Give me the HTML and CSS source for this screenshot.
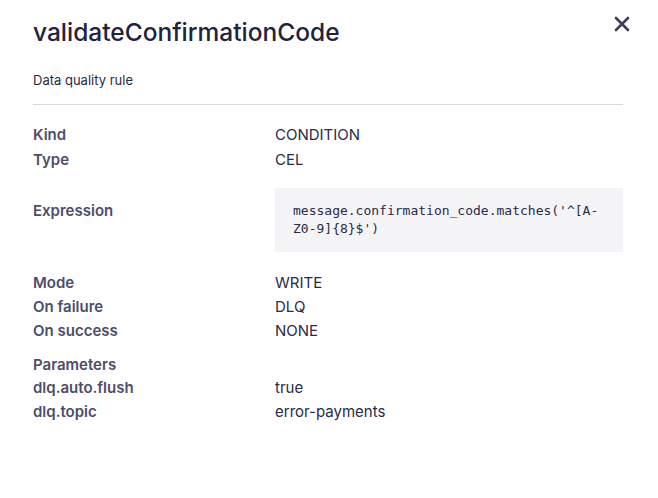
FILE: index.html
```html
<!DOCTYPE html>
<html>
<head>
<meta charset="utf-8">
<link rel="stylesheet" href="styles.css">
</head>
<body>
<div class="panel">
  <header class="header">
    <h1 class="title">validateConfirmationCode</h1>
    <button class="close" aria-label="Close">
      <svg width="16" height="16" viewBox="0 0 16 16"><path d="M2 2 L14 14 M14 2 L2 14" stroke="#3d3d5c" stroke-width="2.6" stroke-linecap="round"/></svg>
    </button>
  </header>
  <p class="subtitle">Data quality rule</p>
  <hr class="divider">
  <div class="group first">
    <div class="row"><span class="label">Kind</span><span class="value">CONDITION</span></div>
    <div class="row"><span class="label">Type</span><span class="value">CEL</span></div>
  </div>
  <div class="group expr">
    <div class="row"><span class="label expr-label">Expression</span><pre class="code">message.confirmation_code.matches('^[A-Z0-9]{8}$')</pre></div>
  </div>
  <div class="group modes">
    <div class="row"><span class="label">Mode</span><span class="value">WRITE</span></div>
    <div class="row"><span class="label">On failure</span><span class="value">DLQ</span></div>
    <div class="row"><span class="label">On success</span><span class="value">NONE</span></div>
  </div>
  <div class="group params">
    <div class="row"><span class="label">Parameters</span><span class="value"></span></div>
    <div class="row"><span class="label">dlq.auto.flush</span><span class="value">true</span></div>
    <div class="row"><span class="label">dlq.topic</span><span class="value">error-payments</span></div>
  </div>
</div>
</body>
</html>
```
FILE: styles.css
```css
html, body {
  margin: 0;
  padding: 0;
  background: #ffffff;
}
body {
  font-family: Inter, "Noto Sans", sans-serif;
  color: #2a2a45;
}
.panel {
  padding: 16px 35px 0 33px;
}
.header {
  display: flex;
  justify-content: space-between;
  align-items: flex-start;
}
.title {
  margin: 0;
  font-size: 24.5px;
  font-weight: 450;
  line-height: 32px;
  color: #22223d;
}
.close {
  border: 0;
  background: none;
  padding: 0;
  margin: 0;
  width: 16px;
  height: 16px;
  margin-right: -7px;
}
.close svg { display: block; }
.subtitle {
  margin: 24px 0 0;
  font-size: 13px;
  line-height: 16px;
  color: #2a2a45;
}
.divider {
  border: 0;
  border-top: 1px solid #d9d9e0;
  margin: 16px 0 0;
}
.group.first { margin-top: 18px; }
.group.expr { margin-top: 16px; }
.group.modes { margin-top: 19px; }
.group.params { margin-top: 10px; }
.row {
  display: grid;
  grid-template-columns: 242px 1fr;
  align-items: start;
}
.first .row + .row { margin-top: 1px; }
.params .row + .row { margin-top: -1px; }
.params .row:last-child { margin-top: 0; }
.label {
  font-size: 15px;
  line-height: 24px;
  font-weight: 600;
  color: #4d4d69;
}
.value {
  font-size: 15px;
  line-height: 24px;
  color: #2a2a45;
}
.expr-label {
  padding-top: 11px;
}
.code {
  margin: 0;
  background: #f4f4f6;
  padding: 14px 18px 14px;
  font-family: "DejaVu Sans Mono", monospace;
  font-size: 13px;
  line-height: 18px;
  color: #2a2a45;
  white-space: pre-wrap;
}
```
